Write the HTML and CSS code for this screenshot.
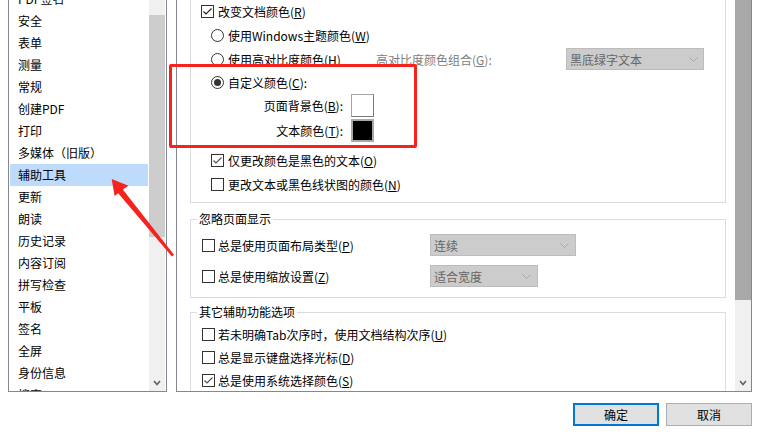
FILE: index.html
```html
<!DOCTYPE html>
<html lang="zh-CN">
<head>
<meta charset="utf-8">
<title>首选项 - 辅助工具</title>
<link rel="stylesheet" href="styles.css">
</head>
<body>
<div class="dialog">
  <div class="panes">
    <div class="list-pane">
      <ul class="cat-list">
        <li>PDF签名</li>
        <li>安全</li>
        <li>表单</li>
        <li>测量</li>
        <li>常规</li>
        <li>创建PDF</li>
        <li>打印</li>
        <li>多媒体（旧版）</li>
        <li class="selected">辅助工具</li>
        <li>更新</li>
        <li>朗读</li>
        <li>历史记录</li>
        <li>内容订阅</li>
        <li>拼写检查</li>
        <li>平板</li>
        <li>签名</li>
        <li>全屏</li>
        <li>身份信息</li>
        <li>搜索</li>
      </ul>
      <div class="vscroll">
        <div class="track-top"></div>
        <div class="thumb"></div>
        <div class="spacer"></div>
        <div class="arrow-btn"><svg width="8" height="6" viewBox="0 0 8 6"><polyline points="1,1 4,4.5 7,1" fill="none" stroke="#606060" stroke-width="1.6"/></svg></div>
      </div>
    </div>

    <div class="content-pane">
      <div class="content">
        <div class="group group-first">
          <label class="opt lvl0 h23"><span class="cb"><svg width="11" height="11" viewBox="0 0 11 11"><polyline points="1.5,5.5 4,8 9.5,2.5" fill="none" stroke="#222" stroke-width="1.2"/></svg></span>改变文档颜色(<u>R</u>)</label>
          <label class="opt lvl1 h24"><span class="rb"></span>使用Windows主题颜色(<u>W</u>)</label>
          <div class="opt lvl1 h24">
            <label class="hc-choice"><span class="rb"></span>使用高对比度颜色(<u>H</u>)</label>
            <span class="disabled-label">高对比度颜色组合(<u>G</u>):</span>
            <span class="combo combo-hc">黑底绿字文本<svg class="chev" width="9" height="5" viewBox="0 0 9 5"><polyline points="0.5,0.5 4.5,4.5 8.5,0.5" fill="none" stroke="#a8a8a8" stroke-width="1"/></svg></span>
          </div>
          <label class="opt lvl1 h23"><span class="rb on"></span>自定义颜色(<u>C</u>):</label>
          <div class="swatch-row"><span class="swatch-label">页面背景色(<u>B</u>):</span><span class="swatch swatch-white"></span></div>
          <div class="swatch-row swatch-row-second"><span class="swatch-label">文本颜色(<u>T</u>):</span><span class="swatch swatch-black"></span></div>
          <label class="opt lvl1 h24 after-swatch"><span class="cb"><svg width="11" height="11" viewBox="0 0 11 11"><polyline points="1.5,5.5 4,8 9.5,2.5" fill="none" stroke="#555" stroke-width="1.2"/></svg></span>仅更改颜色是黑色的文本(<u>O</u>)</label>
          <label class="opt lvl1 h25"><span class="cb"></span>更改文本或黑色线状图的颜色(<u>N</u>)</label>
        </div>

        <fieldset class="group group-layout">
          <legend>忽略页面显示</legend>
          <div class="frow">
            <label class="frow-label"><span class="cb"></span>总是使用页面布局类型(<u>P</u>)</label>
            <span class="combo combo-layout">连续<svg class="chev" width="9" height="5" viewBox="0 0 9 5"><polyline points="0.5,0.5 4.5,4.5 8.5,0.5" fill="none" stroke="#a8a8a8" stroke-width="1"/></svg></span>
          </div>
          <div class="frow frow-next">
            <label class="frow-label"><span class="cb"></span>总是使用缩放设置(<u>Z</u>)</label>
            <span class="combo combo-zoom">适合宽度<svg class="chev" width="9" height="5" viewBox="0 0 9 5"><polyline points="0.5,0.5 4.5,4.5 8.5,0.5" fill="none" stroke="#a8a8a8" stroke-width="1"/></svg></span>
          </div>
        </fieldset>

        <fieldset class="group group-other">
          <legend>其它辅助功能选项</legend>
          <label class="orow"><span class="cb"></span>若未明确Tab次序时，使用文档结构次序(<u>U</u>)</label>
          <label class="orow"><span class="cb"></span>总是显示键盘选择光标(<u>D</u>)</label>
          <label class="orow"><span class="cb"><svg width="11" height="11" viewBox="0 0 11 11"><polyline points="1.5,5.5 4,8 9.5,2.5" fill="none" stroke="#555" stroke-width="1.2"/></svg></span>总是使用系统选择颜色(<u>S</u>)</label>
        </fieldset>
      </div>
      <div class="vscroll vscroll-dark">
        <div class="thumb"></div>
        <div class="spacer"></div>
        <div class="arrow-btn"><svg width="8" height="6" viewBox="0 0 8 6"><polyline points="1,1 4,4.5 7,1" fill="none" stroke="#606060" stroke-width="1.6"/></svg></div>
      </div>
    </div>
  </div>

  <div class="buttons">
    <button class="btn btn-primary">确定</button>
    <button class="btn">取消</button>
  </div>
</div>

<div class="mark-box"></div>
<svg class="mark-arrow" width="772" height="438" viewBox="0 0 772 438">
  <polygon points="111.7,179 128.5,185.8 122.8,189.6 174,254.8 172,256.6 118.2,193.2 114.6,196" fill="#f5231c"/>
</svg>
</body>
</html>
```

FILE: styles.css
```css
* {
  box-sizing: border-box;
}

html,
body {
  margin: 0;
  padding: 0;
}

body {
  width: 772px;
  height: 438px;
  overflow: hidden;
  position: relative;
  background: #ffffff;
  color: #000000;
  font-family: "Noto Sans CJK SC", "Microsoft YaHei", sans-serif;
  font-size: 12px;
}

.dialog {
  display: flex;
  flex-direction: column;
}

.panes {
  display: flex;
  gap: 9px;
  height: 392px;
  margin-left: 8px;
}

/* ---------- left category list ---------- */
.list-pane {
  width: 159px;
  flex: none;
  display: flex;
  border: 1px solid #828790;
  border-top: 0;
  overflow: hidden;
}

.cat-list {
  list-style: none;
  margin: -12px 0 0 0;
  padding: 0;
  width: 140px;
  flex: none;
}

.cat-list li {
  height: 22px;
  line-height: 22px;
  margin: 0 1px;
  padding-left: 8px;
  white-space: nowrap;
}

.cat-list li.selected {
  background: #bfdbfb;
}

.list-pane .vscroll {
  margin-right: 1px;
}

/* ---------- scrollbars ---------- */
.vscroll {
  width: 16px;
  flex: none;
  display: flex;
  flex-direction: column;
  background: #f0f0f0;
}

.vscroll .track-top {
  height: 15px;
  flex: none;
}

.vscroll .thumb {
  height: 222px;
  flex: none;
  background: #cdcdcd;
}

.vscroll-dark .thumb {
  height: 300px;
  background: #a8a8a8;
}

.vscroll .spacer {
  flex: 1;
}

.vscroll .arrow-btn {
  height: 17px;
  flex: none;
  display: flex;
  align-items: center;
  justify-content: center;
}

/* ---------- right content ---------- */
.content-pane {
  width: 576px;
  flex: none;
  display: flex;
  border: 1px solid #828790;
  border-top: 0;
  overflow: hidden;
}

.content {
  flex: 1;
  min-width: 0;
  padding: 0 9px 0 13px;
  overflow: hidden;
}

.group {
  margin: 0;
  padding: 0;
  min-width: 0;
  border: 1px solid #dcdcdc;
}

.group-first {
  border-top: 0;
  padding-bottom: 5px;
}

.opt {
  display: flex;
  align-items: center;
  white-space: nowrap;
}

.lvl0 {
  padding-left: 10px;
}

.lvl1 {
  padding-left: 20px;
}

.h23 {
  height: 23px;
}

.h24 {
  height: 24px;
}

.h25 {
  height: 25px;
}

.after-swatch {
  margin-top: 6px;
}

/* checkbox and radio */
.cb {
  width: 13px;
  height: 13px;
  flex: none;
  margin-right: 4px;
  border: 1px solid #333333;
  background: #ffffff;
  display: flex;
  align-items: center;
  justify-content: center;
}

.rb {
  width: 13px;
  height: 13px;
  flex: none;
  margin-right: 4px;
  border: 1px solid #333333;
  border-radius: 50%;
  background: #ffffff;
  display: flex;
  align-items: center;
  justify-content: center;
}

.rb.on::after {
  content: "";
  width: 7px;
  height: 7px;
  border-radius: 50%;
  background: #333333;
}

.hc-choice {
  width: 165px;
  flex: none;
  display: flex;
  align-items: center;
}

.disabled-label {
  color: #7d7d7d;
}

.combo {
  height: 22px;
  flex: none;
  display: flex;
  align-items: center;
  padding-left: 3px;
  background: #cccccc;
  border: 1px solid #bcbcbc;
  color: #656565;
  white-space: nowrap;
}

.combo .chev {
  margin-left: auto;
  margin-right: 5px;
}

.combo-hc {
  width: 138px;
  margin-left: auto;
  margin-right: 21px;
}

.combo-layout {
  width: 146px;
}

.combo-layout .chev,
.combo-zoom .chev {
  margin-right: 6px;
}

.combo-zoom {
  width: 108px;
}

/* colour swatches */
.swatch-row {
  display: flex;
  align-items: center;
  height: 23px;
}

.swatch-row-second {
  margin-top: 2px;
}

.swatch-label {
  width: 152px;
  text-align: right;
  white-space: nowrap;
}

.swatch {
  width: 23px;
  height: 23px;
  margin-left: 8px;
  border: 1px solid #a3a3a3;
}

.swatch-white {
  background: #ffffff;
  border-right-color: #7a7a7a;
  border-bottom-color: #7a7a7a;
}

.swatch-black {
  background: #000000;
  border: 2px solid #a9a9a9;
}

/* fieldset groups */
fieldset.group {
  padding: 0;
}

fieldset.group legend {
  margin-left: 6px;
  padding: 0 2px;
  height: 16px;
  line-height: 16px;
}

.group-layout {
  margin-top: 8px;
  padding-top: 7px !important;
  padding-bottom: 10px !important;
}

.frow {
  display: flex;
  align-items: center;
  height: 22px;
  padding-left: 11px;
  white-space: nowrap;
}

.frow-next {
  margin-top: 9px;
}

.frow-label {
  width: 228px;
  flex: none;
  display: flex;
  align-items: center;
}

.frow-label .cb,
.orow .cb {
  margin-right: 3px;
}

.group-other {
  margin-top: 6px;
  padding-top: 3px !important;
  padding-bottom: 20px !important;
}

.orow {
  display: flex;
  align-items: center;
  height: 23px;
  padding-left: 11px;
  white-space: nowrap;
}

u {
  text-decoration: underline;
  text-underline-offset: 1px;
}

/* ---------- buttons ---------- */
.buttons {
  display: flex;
  justify-content: flex-end;
  gap: 7px;
  margin-top: 11px;
  padding-right: 20px;
}

.btn {
  width: 86px;
  height: 23px;
  padding: 0;
  background: #e1e1e1;
  border: 1px solid #adadad;
  color: #000000;
  font: inherit;
  line-height: 20px;
}

.btn-primary {
  border: 2px solid #0078d7;
}

/* ---------- annotation overlays ---------- */
.mark-box {
  position: absolute;
  left: 169px;
  top: 64px;
  width: 248px;
  height: 84px;
  border: 3px solid #f5231c;
  border-radius: 2px;
  pointer-events: none;
}

.mark-arrow {
  position: absolute;
  left: 0;
  top: 0;
  pointer-events: none;
}
```
